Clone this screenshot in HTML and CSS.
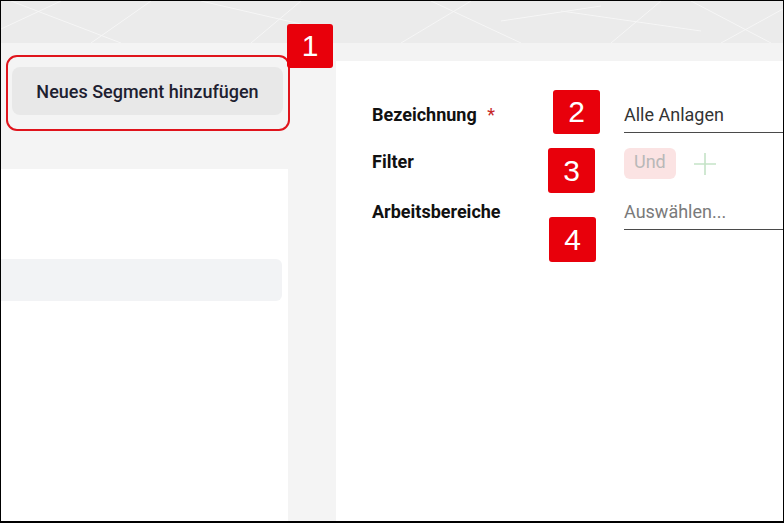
FILE: index.html
```html
<!DOCTYPE html>
<html lang="de">
<head>
<meta charset="utf-8">
<title>Segment</title>
<link rel="stylesheet" href="styles.css">
</head>
<body>
<div class="frame">
  <header class="top">
    <svg class="pattern" width="782" height="42" viewBox="0 0 782 42" preserveAspectRatio="none">
      <g stroke="#ffffff" stroke-width="1" fill="none" opacity="0.55">
        <line x1="0" y1="28" x2="60" y2="0"/>
        <line x1="10" y1="0" x2="120" y2="42"/>
        <line x1="90" y1="42" x2="150" y2="0"/>
        <line x1="200" y1="0" x2="330" y2="30"/>
        <line x1="250" y1="42" x2="300" y2="0"/>
        <line x1="400" y1="42" x2="470" y2="0"/>
        <line x1="430" y1="0" x2="520" y2="42"/>
        <line x1="500" y1="20" x2="600" y2="5"/>
        <line x1="560" y1="10" x2="700" y2="30"/>
        <line x1="610" y1="42" x2="660" y2="0"/>
        <line x1="690" y1="0" x2="770" y2="42"/>
        <line x1="720" y1="42" x2="782" y2="8"/>
      </g>
    </svg>
  </header>
  <div class="main">
    <aside class="left">
      <div class="btn-row">
        <button class="btn">Neues Segment hinzufügen</button>
      </div>
      <div class="card">
        <div class="bar"></div>
      </div>
    </aside>
    <section class="panel">
      <div class="form">
        <div class="label">Bezeichnung <span class="req">*</span></div>
        <div class="field"><span class="value">Alle Anlagen</span></div>
        <div class="label row2">Filter</div>
        <div class="filter row2">
          <span class="chip">Und</span>
          <svg class="plus" width="24" height="24" viewBox="0 0 24 24"><path d="M12 1v22M1 12h22" stroke="#c5e3c7" stroke-width="1.6" fill="none"/></svg>
        </div>
        <div class="label row3">Arbeitsbereiche</div>
        <div class="field row3"><span class="placeholder">Auswählen...</span></div>
      </div>
    </section>
  </div>

  <div class="outline"></div>
  <div class="badge b1">1</div>
  <div class="badge b2">2</div>
  <div class="badge b3">3</div>
  <div class="badge b4">4</div>
</div>
</body>
</html>
```

FILE: styles.css
```css
* { box-sizing: border-box; }
html, body { margin: 0; padding: 0; background: #fff; }
body { font-family: Roboto, "Liberation Sans", Arial, sans-serif; }

.frame {
  position: relative;
  width: 784px;
  height: 523px;
  border-style: solid;
  border-color: #000;
  border-width: 1px 1px 2px 1px;
  overflow: hidden;
  display: flex;
  flex-direction: column;
  background: #f3f3f3;
}

.top {
  height: 42px;
  flex: none;
  background: #ebebeb;
}
.pattern { display: block; }

.main {
  flex: 1;
  display: flex;
  background: #f3f3f3;
}

.left {
  width: 335px;
  flex: none;
  display: flex;
  flex-direction: column;
  padding-right: 48px;
  background: #f4f4f4;
}
.btn-row {
  padding: 24px 0 0 11px;
  height: 126px;
}
.btn {
  width: 271px;
  height: 48px;
  border: 0;
  border-radius: 8px;
  background: #e8e8e8;
  color: #1d2030;
  font-family: Roboto, "Liberation Sans", Arial, sans-serif;
  font-weight: 500;
  font-size: 18px;
  padding: 0;
  margin: 0;
}
.card {
  flex: 1;
  background: #fff;
  padding-top: 90px;
  padding-right: 6px;
}
.bar {
  height: 42px;
  background: #f2f3f5;
  border-radius: 0 6px 6px 0;
}

.panel {
  flex: 1;
  margin-top: 18px;
  background: #fff;
  padding: 39px 0 0 36px;
}
.form {
  display: grid;
  grid-template-columns: 252px 1fr;
  align-items: start;
}
.row2 { margin-top: 15px; }
.row3 { margin-top: 18px; }

.label {
  font-weight: 700;
  font-size: 18px;
  line-height: 21px;
  padding-top: 4px;
  color: #111;
}
.label.row2 { padding-top: 3px; }
.req { color: #c62828; font-weight: 400; margin-left: 6px; }

.field {
  border-bottom: 1px solid #4a4a4a;
  padding: 4px 0 7px;
  font-size: 18px;
  line-height: 21px;
}
.value { color: #333; }
.placeholder { color: #7a7a7a; }

.filter {
  display: flex;
  align-items: center;
  gap: 17px;
}
.chip {
  display: inline-block;
  height: 31px;
  padding: 3px 10px 0;
  background: #fbe3e3;
  border-radius: 6px;
  color: #b8b8b8;
  font-size: 18px;
  line-height: 21px;
}
.plus { display: block; }

.outline {
  position: absolute;
  left: 5px;
  top: 54px;
  width: 284px;
  height: 76px;
  border: 2.5px solid #e0141c;
  border-radius: 11px;
}
.badge {
  position: absolute;
  width: 47px;
  height: 44px;
  background: #e8000b;
  border-radius: 3px;
  color: #fff;
  font-family: "Liberation Sans", Arial, sans-serif;
  font-size: 30px;
  display: flex;
  align-items: center;
  justify-content: center;
}
.b1 { left: 286px; top: 23px; width: 46px; }
.b2 { left: 552px; top: 89px; }
.b3 { left: 547px; top: 147px; height: 45px; }
.b4 { left: 548px; top: 216px; height: 45px; }
```
